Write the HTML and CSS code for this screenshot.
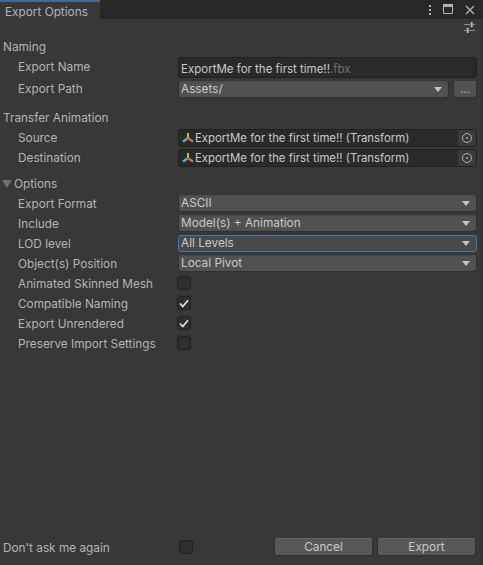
FILE: index.html
```html
<!DOCTYPE html>
<html lang="en">
<head>
    <meta charset="UTF-8">
    <meta name="viewport" content="width=device-width, initial-scale=1.0">
    <title>Export Options</title>
    <link rel="stylesheet" href="styles.css">
</head>
<body>
    <div class="window">
        <header class="tabbar">
            <div class="tab">Export Options</div>
            <div class="tab-icons">
                <svg width="4" height="12" viewBox="0 0 4 12"><path d="M1 1h2v2H1zM1 5h2v2H1zM1 9h2v2H1z" fill="#b4b4b4"/></svg>
                <svg width="11" height="11" viewBox="0 0 11 11"><path d="M.5.5h9v9h-9z" fill="none" stroke="#b4b4b4"/><path d="M0 0h10v3H0z" fill="#b4b4b4"/></svg>
                <svg width="10" height="10" viewBox="0 0 10 10"><path d="M1 1l8 8M9 1l-8 8" fill="none" stroke="#b4b4b4" stroke-width="1.300"/></svg>
            </div>
        </header>

        <main class="content">
            <div class="preset-row">
                <svg width="11" height="11" viewBox="0 0 11 11"><path d="M0 2.500h6M8.500 2.500h2.500M0 8.500h2M4.500 8.500H11M7 0h1.300v5H7zM3 6h1.300v5H3z" fill="#b4b4b4" stroke="#b4b4b4" stroke-width=".7"/></svg>
            </div>

            <section class="group">
                <div class="heading">Naming</div>
                <div class="row">
                    <label>Export Name</label>
                    <div class="field name-field">ExportMe for the first time!!<span class="ext">.fbx</span></div>
                </div>
                <div class="row path-row">
                    <label>Export Path</label>
                    <div class="path-controls">
                        <div class="dropdown">Assets/<i class="arrow"></i></div>
                        <div class="browse">...</div>
                    </div>
                </div>
            </section>

            <section class="group transfer">
                <div class="heading">Transfer Animation</div>
                <div class="row">
                    <label>Source</label>
                    <div class="field object-field">
                        <svg class="transform-icon" width="12" height="12" viewBox="0 0 12 12"><path d="M6 1v5" stroke="#9ccc65" stroke-width="2"/><path d="M5.500 6.500L1 9.500" stroke="#4fb3e0" stroke-width="2.200"/><path d="M6.500 6.500l4.500 3" stroke="#ec6a40" stroke-width="2.200"/></svg>
                        <span class="object-name">ExportMe for the first time!! (Transform)</span>
                        <span class="picker"><i class="target"></i></span>
                    </div>
                </div>
                <div class="row">
                    <label>Destination</label>
                    <div class="field object-field">
                        <svg class="transform-icon" width="12" height="12" viewBox="0 0 12 12"><path d="M6 1v5" stroke="#9ccc65" stroke-width="2"/><path d="M5.500 6.500L1 9.500" stroke="#4fb3e0" stroke-width="2.200"/><path d="M6.500 6.500l4.500 3" stroke="#ec6a40" stroke-width="2.200"/></svg>
                        <span class="object-name">ExportMe for the first time!! (Transform)</span>
                        <span class="picker"><i class="target"></i></span>
                    </div>
                </div>
            </section>

            <section class="group options">
                <div class="heading foldout"><i class="fold-arrow"></i>Options</div>
                <div class="row">
                    <label>Export Format</label>
                    <div class="dropdown">ASCII<i class="arrow"></i></div>
                </div>
                <div class="row">
                    <label>Include</label>
                    <div class="dropdown">Model(s) + Animation<i class="arrow"></i></div>
                </div>
                <div class="row">
                    <label>LOD level</label>
                    <div class="dropdown focused">All Levels<i class="arrow"></i></div>
                </div>
                <div class="row">
                    <label>Object(s) Position</label>
                    <div class="dropdown">Local Pivot<i class="arrow"></i></div>
                </div>
                <div class="row">
                    <label>Animated Skinned Mesh</label>
                    <div class="checkbox"></div>
                </div>
                <div class="row">
                    <label>Compatible Naming</label>
                    <div class="checkbox"><svg width="10" height="9" viewBox="0 0 10 9"><path d="M1 4.500l2.800 3L9 1.200" fill="none" stroke="#e0e0e0" stroke-width="1.700"/></svg></div>
                </div>
                <div class="row">
                    <label>Export Unrendered</label>
                    <div class="checkbox"><svg width="10" height="9" viewBox="0 0 10 9"><path d="M1 4.500l2.800 3L9 1.200" fill="none" stroke="#e0e0e0" stroke-width="1.700"/></svg></div>
                </div>
                <div class="row">
                    <label>Preserve Import Settings</label>
                    <div class="checkbox"></div>
                </div>
            </section>

            <footer class="footer">
                <span class="footer-label">Don't ask me again</span>
                <div class="checkbox"></div>
                <div class="buttons">
                    <button>Cancel</button>
                    <button>Export</button>
                </div>
            </footer>
        </main>
    </div>
</body>
</html>
```

FILE: styles.css
```css
* {
    box-sizing: border-box;
}

html, body {
    height: 100%;
}

body {
    margin: 0;
    background-color: #383838;
    color: #b4b4b4;
    font-family: Inter, "Liberation Sans", sans-serif;
    font-size: 11.8px;
    overflow: hidden;
}

.window {
    display: flex;
    flex-direction: column;
    height: 565px;
    border-right: 3px solid #333;
}

.tabbar {
    display: flex;
    justify-content: space-between;
    height: 19px;
    margin-right: -3px;
    background-color: #282828;
}

.tab {
    width: 100px;
    padding: 3px 0 0 5px;
    background-color: #383838;
    border-top: 2px solid #3a6d9c;
    line-height: 14px;
}

.tab-icons {
    display: flex;
    align-items: center;
    gap: 11px;
    padding: 0 8px 0 0;
}

.content {
    display: flex;
    flex-direction: column;
    flex: 1;
    padding: 0 3px 0 3px;
}

.preset-row {
    display: flex;
    justify-content: flex-end;
    height: 18px;
    padding: 3px 2px 0 0;
}

.group {
    display: flex;
    flex-direction: column;
}

.heading {
    height: 20px;
    line-height: 20px;
}

.transfer {
    margin-top: 7px;
}

.options {
    margin-top: 6px;
}

.foldout {
    display: flex;
    align-items: center;
    margin-left: -1px;
}

.fold-arrow {
    width: 0;
    height: 0;
    margin-right: 2px;
    border-left: 5px solid transparent;
    border-right: 5px solid transparent;
    border-top: 8px solid #707070;
}

.row {
    display: flex;
    align-items: center;
    height: 20px;
}

.row label {
    flex: 0 0 175px;
    padding-left: 15px;
    line-height: 20px;
}

.path-row {
    height: 24px;
}

.path-controls {
    display: flex;
    flex: 1;
    gap: 4px;
}

.field {
    flex: 1;
    background-color: #2a2a2a;
    border: 1px solid #212121;
    border-radius: 3px;
}

.name-field {
    height: 21px;
    padding: 3px 0 0 2px;
    font-size: 11.5px;
    line-height: 16px;
    color: #c8c8c8;
}

.ext {
    color: #707070;
}

.object-field {
    display: flex;
    align-items: center;
    height: 18px;
    padding-left: 3px;
    font-size: 11.4px;
}

.transform-icon {
    flex: none;
    margin-right: 1px;
}

.object-name {
    flex: 1;
    white-space: nowrap;
    overflow: hidden;
    color: #c8c8c8;
}

.picker {
    display: flex;
    align-items: center;
    justify-content: center;
    width: 18px;
    height: 16px;
    background-color: #3a3a3a;
    border-radius: 0 2px 2px 0;
}

.target {
    position: relative;
    width: 10px;
    height: 10px;
    border: 1px solid #b4b4b4;
    border-radius: 50%;
}

.target::after {
    content: "";
    position: absolute;
    left: 3px;
    top: 3px;
    width: 2px;
    height: 2px;
    background-color: #b4b4b4;
    border-radius: 50%;
}

.dropdown {
    display: flex;
    align-items: center;
    justify-content: space-between;
    flex: 1;
    height: 17px;
    padding: 0 6px 0 2px;
    background-color: #515151;
    border: 1px solid #303030;
    border-top-color: #4a4a4a;
    border-radius: 3px;
    color: #c8c8c8;
}

.options .dropdown {
    margin-bottom: 2px;
}

.focused {
    background-color: #4a4a4a;
    border: 1px solid #3a79bb;
}

.arrow {
    width: 0;
    height: 0;
    border-left: 4px solid transparent;
    border-right: 4px solid transparent;
    border-top: 5px solid #c4c4c4;
}

.browse {
    width: 24px;
    height: 17px;
    background-color: #515151;
    border: 1px solid #303030;
    border-top-color: #5a5a5a;
    border-radius: 3px;
    text-align: center;
    line-height: 15px;
}

.checkbox {
    display: flex;
    align-items: center;
    justify-content: center;
    width: 14px;
    height: 14px;
    background-color: #2f2f2f;
    border: 1px solid #212121;
    border-radius: 3px;
}

.options .checkbox {
    margin: 0 0 2px -1px;
}

.footer {
    display: flex;
    align-items: center;
    height: 20px;
    margin-top: auto;
    margin-bottom: 8px;
}

.footer-label {
    flex: 0 0 176px;
    padding-top: 1px;
}

.buttons {
    display: flex;
    gap: 4px;
    margin-left: auto;
    margin-right: 1px;
}

button {
    width: 99px;
    height: 18px;
    padding: 0;
    background-color: #585858;
    border: 1px solid #303030;
    border-top-color: #656565;
    border-radius: 3px;
    color: #c8c8c8;
    font-family: inherit;
    font-size: 11.8px;
}
```
